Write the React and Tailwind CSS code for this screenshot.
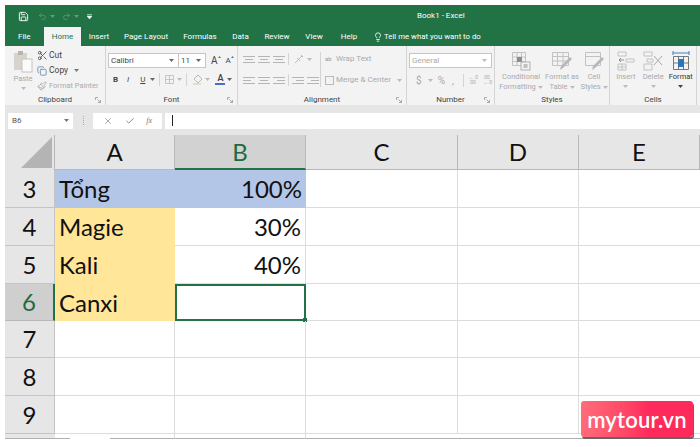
import React from 'react';
import { Save, Undo2, Redo2, Lightbulb, Scissors, Copy, Paintbrush, X, Check } from 'lucide-react';

const TABS = [
  { name: 'Insert', width: 'w-[36px]' },
  { name: 'Page Layout', width: 'w-[58px]' },
  { name: 'Formulas', width: 'w-[50px]' },
  { name: 'Data', width: 'w-[31px]' },
  { name: 'Review', width: 'w-[42px]' },
  { name: 'View', width: 'w-[32px]' },
  { name: 'Help', width: 'w-[38px]' },
];

const Caret = ({ className = '' }) => (
  <svg width="5" height="3" viewBox="0 0 5 3" className={`shrink-0 ${className}`}>
    <path d="M0 0h5L2.500 3z" fill="currentColor" />
  </svg>
);

const Launcher = () => (
  <svg width="6" height="6" viewBox="0 0 6 6" className="text-[#999]">
    <path d="M0.500 3V0.500H3M5.500 5.500L2.500 2.500M5.500 3v2.500H3" fill="none" stroke="currentColor" strokeWidth="0.8" />
  </svg>
);

const Lines = ({ align = 'center' }) => {
  const items = { left: 'items-start', center: 'items-center', right: 'items-end' }[align];
  return (
    <div className={`flex w-[12px] flex-col gap-[2px] ${items}`}>
      <div className="h-px w-[12px] bg-[#b5b5b5]" />
      <div className="h-px w-[8px] bg-[#b5b5b5]" />
      <div className="h-px w-[12px] bg-[#b5b5b5]" />
    </div>
  );
};

const Group = ({ label, width, launcher, children }) => (
  <div className={`flex h-full shrink-0 flex-col border-r border-[#d4d4d4] ${width}`}>
    <div className="min-h-0 flex-1">{children}</div>
    <div className="relative flex h-[13px] items-center justify-center pt-[2px] text-[8px] text-[#444]">
      {label}
      {launcher && <div className="absolute right-[4px] top-[5px] flex"><Launcher /></div>}
    </div>
  </div>
);

const Clipboard = () => (
  <div className="flex pl-[7px] pt-[2px]">
    <div className="mt-[2px] flex w-[22px] flex-col items-center text-[#a8a8a8]">
      <svg width="20" height="23" viewBox="0 0 20 23">
        <rect x="1" y="3" width="13" height="17" fill="#d6d2cc" />
        <rect x="5" y="1" width="5" height="4" fill="#b9b5ae" />
        <rect x="9" y="9" width="10" height="13" fill="#fafafa" stroke="#c4c4c4" />
      </svg>
      <span className="mt-[1px] text-[7.5px] leading-[10px]">Paste</span>
      <Caret className="mt-[3px] text-[#bbb]" />
    </div>
    <div className="ml-[3px] flex flex-col whitespace-nowrap text-[8.5px] leading-[15px] text-[#444]">
      <div className="flex h-[15px] items-center gap-[1px]">
        <Scissors size={11} className="text-[#555]" />
        <span>Cut</span>
      </div>
      <div className="flex h-[15px] items-center gap-[2px]">
        <Copy size={10} className="text-[#6b87a8]" />
        <span>Copy</span>
        <Caret className="ml-[4px] text-[#777]" />
      </div>
      <div className="flex h-[15px] items-center gap-[2px] text-[#aaa]">
        <Paintbrush size={10} className="text-[#aaa]" />
        <span className="text-[7.5px]">Format Painter</span>
      </div>
    </div>
  </div>
);

const GrowFont = ({ size }) => (
  <div className={`relative flex h-[12px] items-center leading-none text-[#444] ${size}`}>
    A
    <svg width="3" height="2" viewBox="0 0 3 2" className="absolute -right-[3px] top-[1px]">
      <path d="M0 2h3L1.500 0z" fill="#3d7ec2" />
    </svg>
  </div>
);

const Font = () => (
  <div className="pl-[2px] pt-[7px]">
    <div className="flex h-[15px] items-center">
      <div className="flex h-[15px] w-[71px] items-center justify-between border border-[#c6c6c6] bg-white pl-[2px] pr-[4px] text-[8px] text-[#444]">
        Calibri <Caret className="text-[#666]" />
      </div>
      <div className="flex h-[15px] w-[27px] items-center justify-between border border-l-0 border-[#c6c6c6] bg-white pl-[2px] pr-[4px] text-[8px] text-[#444]">
        11 <Caret className="text-[#666]" />
      </div>
      <div className="ml-[5px]"><GrowFont size="text-[10px]" /></div>
      <div className="ml-[8px]"><GrowFont size="text-[8px]" /></div>
    </div>
    <div className="mt-[4px] flex h-[15px] items-center text-[#444]">
      <span className="ml-[5px] text-[8px] font-bold">B</span>
      <span className="ml-[9px] text-[8px] italic">I</span>
      <span className="ml-[11px] text-[8px] underline">U</span>
      <Caret className="ml-[5px] text-[#666]" />
      <div className="ml-[4px] h-[13px] w-px bg-[#d4d4d4]" />
      <svg width="9" height="9" viewBox="0 0 9 9" className="ml-[5px]">
        <path d="M.5.5h8v8h-8zM4.500.5v8M.5 4.500h8" fill="none" stroke="#c4c4c4" />
      </svg>
      <Caret className="ml-[3px] text-[#bbb]" />
      <div className="ml-[4px] h-[13px] w-px bg-[#d4d4d4]" />
      <svg width="11" height="11" viewBox="0 0 11 11" className="ml-[5px]">
        <path d="M2 5l4-4 4 4-4 4z" fill="none" stroke="#bbb" />
        <rect x="1" y="9" width="8" height="2" fill="#e2dcc8" />
      </svg>
      <Caret className="ml-[2px] text-[#bbb]" />
      <div className="ml-[5px] flex flex-col items-center">
        <span className="text-[9px] font-semibold leading-[9px]">A</span>
        <div className="h-[2px] w-[10px] bg-[#4472c4]" />
      </div>
      <Caret className="ml-[2px] text-[#666]" />
    </div>
  </div>
);

const Alignment = () => (
  <div className="flex pl-[5px] pt-[6px]">
    <div className="flex w-[77px] flex-col">
      <div className="flex h-[14px] items-center gap-[3px]">
        <Lines /><Lines /><Lines />
        <div className="h-[12px] w-px bg-[#d4d4d4]" />
        <svg width="10" height="10" viewBox="0 0 10 10" className="ml-[2px]">
          <path d="M1 9l7-7M3 4l3 3M7 1l2 2" fill="none" stroke="#bbb" />
        </svg>
        <Caret className="text-[#bbb]" />
      </div>
      <div className="mt-[7px] flex h-[14px] items-center gap-[3px]">
        <Lines align="left" /><Lines /><Lines align="right" />
        <div className="h-[12px] w-px bg-[#d4d4d4]" />
        <Lines align="right" /><Lines align="right" />
      </div>
    </div>
    <div className="h-[35px] w-px bg-[#d4d4d4]" />
    <div className="ml-[4px] flex flex-col whitespace-nowrap text-[8px] text-[#aaa]">
      <div className="flex h-[14px] items-center gap-[2px]">
        <span className="w-[9px] text-[6px] leading-[6px] text-[#999]">ab</span>
        <span>Wrap Text</span>
      </div>
      <div className="mt-[7px] flex h-[14px] items-center gap-[2px]">
        <div className="h-[9px] w-[9px] border border-[#bbb]" />
        <span>Merge &amp; Center</span>
        <Caret className="ml-[4px] text-[#bbb]" />
      </div>
    </div>
  </div>
);

const NumberGroup = () => (
  <div className="px-[2px] pt-[7px]">
    <div className="flex h-[15px] w-[83px] items-center justify-between border border-[#c6c6c6] bg-white pl-[2px] pr-[4px] text-[8px] text-[#aaa]">
      General <Caret className="text-[#bbb]" />
    </div>
    <div className="mt-[5px] flex h-[14px] items-center pl-[7px] text-[10px] text-[#aaa]">
      <span>$</span>
      <Caret className="ml-[6px] text-[#bbb]" />
      <span className="ml-[5px]">%</span>
      <span className="ml-[7px]">,</span>
      <div className="ml-[9px] h-[13px] w-px bg-[#d4d4d4]" />
      <div className="ml-[5px] flex w-[12px] flex-col text-[5px] leading-[5px]"><span>←.0</span><span>.00</span></div>
      <div className="ml-[3px] flex w-[10px] flex-col text-[5px] leading-[5px]"><span>.00</span><span>→.0</span></div>
    </div>
  </div>
);

const ConditionalIcon = () => (
  <svg width="20" height="20" viewBox="0 0 20 20">
    <path d="M1.500 1.500h13v13h-13zM1.500 6h13M1.500 10.500h13M6 1.500v13M10.500 1.500v13" fill="none" stroke="#c2c2c2" />
    <rect x="6" y="6" width="5" height="5" fill="#8d8d8d" />
    <rect x="10" y="11" width="9" height="8" fill="#f3f3f3" stroke="#b0b0b0" />
    <path d="M12.500 14h4M12.500 16h4" stroke="#8d8d8d" />
  </svg>
);

const TableIcon = () => (
  <svg width="22" height="20" viewBox="0 0 22 20">
    <path d="M1.500 1.500h16v13h-16zM1.500 5.500h16M1.500 10h16M6.500 1.500v13M12 1.500v13" fill="none" stroke="#c2c2c2" />
    <path d="M21 8l-9 9-3 2 1-4 9-9z" fill="#b8b8b8" />
  </svg>
);

const CellStyleIcon = () => (
  <svg width="21" height="20" viewBox="0 0 21 20">
    <path d="M1.500 1.500h15v13h-15zM1.500 5.500h15" fill="none" stroke="#c2c2c2" />
    <path d="M20 8l-9 9-3 2 1-4 9-9z" fill="#b8b8b8" />
  </svg>
);

const StyleButton = ({ top, bottom, width, children }) => (
  <div className={`flex flex-col items-center whitespace-nowrap text-[7.5px] leading-[10px] text-[#aaa] ${width}`}>
    <div className="h-[21px]">{children}</div>
    <span>{top}</span>
    <span className="flex items-center gap-[2px]">{bottom}<Caret className="text-[#bbb]" /></span>
  </div>
);

const CellButton = ({ label, active, children }) => (
  <div className={`flex w-[27.5px] flex-col items-center text-[7.5px] leading-[10px] ${active ? 'text-[#333]' : 'text-[#aaa]'}`}>
    <div className="h-[21px]">{children}</div>
    <span>{label}</span>
    <Caret className={`mt-[3px] ${active ? 'text-[#444]' : 'text-[#bbb]'}`} />
  </div>
);

const Ribbon = () => (
  <div className="flex h-[59px] bg-[#f3f3f3] font-['Roboto',sans-serif]">
    <Group label="Clipboard" width="w-[101px]" launcher><Clipboard /></Group>
    <Group label="Font" width="w-[132px]" launcher><Font /></Group>
    <Group label="Alignment" width="w-[169px]" launcher><Alignment /></Group>
    <Group label="Number" width="w-[88px]" launcher><NumberGroup /></Group>
    <Group label="Styles" width="w-[115px]">
      <div className="flex pl-[3px] pt-[5px]">
        <StyleButton top="Conditional" bottom="Formatting" width="w-[46px]"><ConditionalIcon /></StyleButton>
        <StyleButton top="Format as" bottom="Table" width="w-[36px]"><TableIcon /></StyleButton>
        <StyleButton top="Cell" bottom="Styles" width="w-[28px]"><CellStyleIcon /></StyleButton>
      </div>
    </Group>
    <Group label="Cells" width="w-[87px]">
      <div className="flex pl-[2px] pt-[5px]">
        <CellButton label="Insert">
          <svg width="18" height="20" viewBox="0 0 18 20">
            <path d="M1 1h8v4H1zM1 13h8v6H1zM5 13v6M1 16h8M9 8h8v3H9z" fill="none" stroke="#c2c2c2" />
            <path d="M7 9H2m2-2L2 9l2 2" fill="none" stroke="#8d8d8d" />
          </svg>
        </CellButton>
        <CellButton label="Delete">
          <svg width="20" height="20" viewBox="0 0 20 20">
            <path d="M1 1h8v4H1zM1 13h8v6H1zM4 8h6v3H4z" fill="none" stroke="#c2c2c2" />
            <path d="M11 5l8 9M19 5l-8 9" stroke="#a8a8a8" />
          </svg>
        </CellButton>
        <CellButton label="Format" active>
          <svg width="20" height="21" viewBox="0 0 20 21">
            <path d="M2 2h16M2 0v4M18 0v4" stroke="#3d7ec2" fill="none" />
            <path d="M2.500 5.500h15v13h-15zM7.500 5.500v13M12.500 5.500v13M2.500 12h15" fill="none" stroke="#777" />
            <rect x="7" y="8" width="6" height="8" fill="#2e75b6" />
          </svg>
        </CellButton>
      </div>
    </Group>
  </div>
);

const FormulaBar = () => (
  <div className="flex h-[30px] items-center bg-[#e6e6e6] pl-[3px] pt-[1px] font-['Roboto',sans-serif]">
    <div className="flex h-[16px] w-[65px] items-center justify-between rounded-[1px] bg-white px-[4px] text-[8px] text-[#555]">
      B6 <Caret className="text-[#777]" />
    </div>
    <div className="ml-[10px] mr-[9px] h-[9px] border-l border-dotted border-[#aaa]" />
    <div className="flex h-[16px] w-[69px] items-center justify-around rounded-[1px] bg-white px-[4px] text-[#777]">
      <X size={10} strokeWidth={1.5} />
      <Check size={10} strokeWidth={2} />
      <span className="font-['Liberation_Serif',serif] text-[8px] italic">fx</span>
    </div>
    <div className="ml-[3px] flex h-[16px] flex-1 items-center bg-white pl-[7px]">
      <div className="h-[11px] w-px bg-[#222]" />
    </div>
  </div>
);

const COLUMNS = [
  { name: 'A', width: 'w-[120px]' },
  { name: 'B', width: 'w-[131px]', selected: true },
  { name: 'C', width: 'w-[152px]' },
  { name: 'D', width: 'w-[121px]' },
  { name: 'E', width: 'w-[121px]' },
];

const ROWS = [
  { n: 3, h: 'h-[38px]', a: 'Tổng', b: '100%', aBg: 'bg-[#b4c6e7]', bBg: 'bg-[#b4c6e7]' },
  { n: 4, h: 'h-[38px]', a: 'Magie', b: '30%', aBg: 'bg-[#ffe699]' },
  { n: 5, h: 'h-[38px]', a: 'Kali', b: '40%', aBg: 'bg-[#ffe699]' },
  { n: 6, h: 'h-[37px]', a: 'Canxi', aBg: 'bg-[#ffe699]', active: true },
  { n: 7, h: 'h-[37px]' },
  { n: 8, h: 'h-[38px]' },
  { n: 9, h: 'h-[38px]' },
];

const Sheet = () => (
  <div className="font-['Lato',sans-serif] text-[24px] text-[#111]">
    <div className="flex h-[35px]">
      <div className="flex w-[50px] shrink-0 items-end justify-end border-r border-[#b8b8b8] bg-[#e6e6e6] pb-[2px] pr-[2px]">
        <svg width="31" height="31" viewBox="0 0 31 31"><path d="M31 0v31H0z" fill="#b4b4b4" /></svg>
      </div>
      {COLUMNS.map((c) => (
        <div
          key={c.name}
          className={`flex shrink-0 items-center justify-center border-r ${c.width} ${c.selected ? 'border-b-2 border-r-[#b8b8b8] border-b-[#217346] bg-[#d2d2d2] text-[#1e6b41]' : 'border-b border-[#b8b8b8] bg-[#e6e6e6]'}`}
        >
          {c.name}
        </div>
      ))}
    </div>
    {ROWS.map((r) => (
      <div key={r.n} className={`flex ${r.h}`}>
        <div className={`flex w-[50px] shrink-0 items-center justify-center border-b border-r ${r.active ? 'border-b-[#b8b8b8] border-r-2 border-r-[#217346] bg-[#cfcfcf] text-[#1e6b41]' : 'border-[#c4c4c4] bg-[#e6e6e6]'}`}>
          {r.n}
        </div>
        <div className={`flex w-[120px] shrink-0 items-center pl-[4px] ${r.aBg || 'border-b border-r border-[#dcdcdc]'}`}>{r.a}</div>
        <div className={`relative flex w-[131px] shrink-0 items-center justify-end pr-[4px] ${r.active ? 'border-2 border-[#217346]' : r.bBg || 'border-b border-r border-[#dcdcdc]'}`}>
          {r.b}
          {r.active && <div className="absolute -bottom-[3px] -right-[3px] h-[4px] w-[4px] bg-[#217346]" />}
        </div>
        <div className="w-[152px] shrink-0 border-b border-r border-[#dcdcdc]" />
        <div className="w-[121px] shrink-0 border-b border-r border-[#dcdcdc]" />
        <div className="w-[121px] shrink-0 border-b border-[#dcdcdc]" />
      </div>
    ))}
    <div className="flex h-[5px]">
      <div className="w-[50px] shrink-0 border-b border-[#b0b0b0] bg-[#e6e6e6]" />
      <div className="w-[15px] shrink-0 border-b border-[#b0b0b0]" />
      <div className="w-[40px] shrink-0" />
      <div className="w-[65px] shrink-0 border-b border-r border-[#b0b0b0] border-r-[#dcdcdc]" />
      <div className="w-[131px] shrink-0 border-b border-r border-[#b0b0b0] border-r-[#dcdcdc]" />
      <div className="flex-1 border-b border-[#b0b0b0]" />
    </div>
  </div>
);

export default function App() {
  return (
    <div className="relative h-[447px] w-[700px] overflow-hidden bg-white pl-[5px] pt-[5px]">
      <div className="h-[41px] bg-[#217346] font-['Roboto',sans-serif] text-white">
        <div className="flex h-[22px] items-center">
          <Save size={11} className="ml-[13px]" />
          <Undo2 size={9} className="ml-[9px] text-[#5f9c7c]" />
          <Caret className="ml-[3px] text-[#5f9c7c]" />
          <Redo2 size={9} className="ml-[7px] text-[#5f9c7c]" />
          <Caret className="ml-[3px] text-[#5f9c7c]" />
          <svg width="5" height="5" viewBox="0 0 5 5" className="ml-[8px]">
            <path d="M0 .5h5M0 2h5L2.500 5z" fill="#fff" stroke="#fff" strokeWidth="0.5" />
          </svg>
          <span className="ml-[325px] text-[8px]">Book1 - Excel</span>
        </div>
        <div className="flex h-[19px] items-center text-[8px]">
          <span className="w-[39px] pl-[13px]">File</span>
          <div className="flex h-full w-[37px] items-center justify-center bg-[#f3f3f3] text-[#217346]">Home</div>
          {TABS.map((t) => (
            <span key={t.name} className={`flex justify-center whitespace-nowrap ${t.width}`}>{t.name}</span>
          ))}
          <Lightbulb size={10} className="ml-[5px]" />
          <span className="ml-[1px] whitespace-nowrap text-[7.8px]">Tell me what you want to do</span>
        </div>
      </div>
      <Ribbon />
      <FormulaBar />
      <Sheet />
      <div className="absolute left-[581px] top-[401px] flex h-[36px] w-[112px] items-center justify-center rounded-[3px] bg-gradient-to-r from-[#ff6b7a] to-[#ff2a5c] to-60% font-['Lato',sans-serif] text-[22px] font-semibold tracking-[0.2px] text-white shadow-[1px_2px_0_#666]">
        mytour.vn
      </div>
    </div>
  );
}
